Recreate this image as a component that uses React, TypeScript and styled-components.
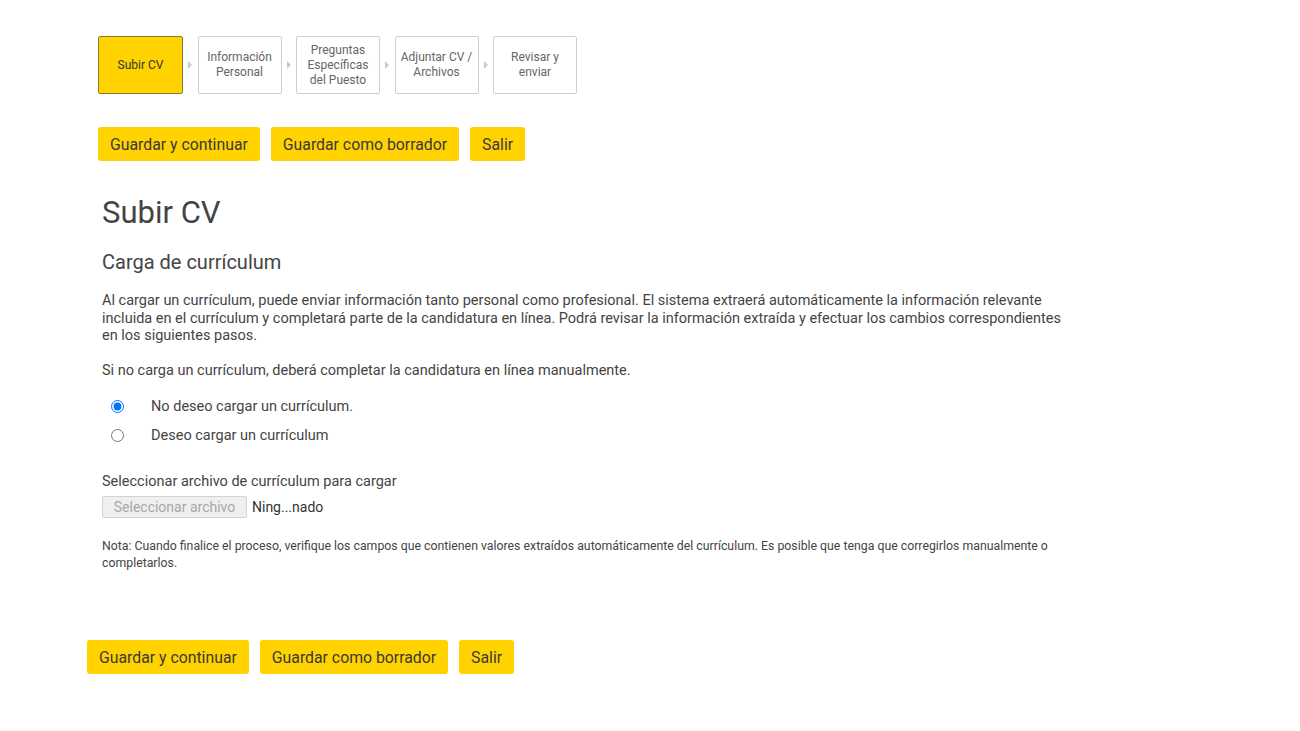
import React, { useState } from 'react';
import styled, { createGlobalStyle } from 'styled-components';

const GlobalStyle = createGlobalStyle`
  body {
    margin: 0;
    background: #ffffff;
    font-family: Roboto, "Liberation Sans", Arial, sans-serif;
    color: #444444;
  }
`;

const Page = styled.div`
  padding: 36px 0 0 98px;
  width: 1300px;
  box-sizing: border-box;
`;

const Stepper = styled.ol`
  display: flex;
  align-items: center;
  list-style: none;
  margin: 0;
  padding: 0;
`;

const StepItem = styled.li`
  display: flex;
  align-items: center;
`;

interface StepBoxProps {
  active: boolean;
}

const StepBox = styled.div<StepBoxProps>`
  width: ${props => (props.active ? 85 : 84)}px;
  height: 58px;
  box-sizing: border-box;
  display: flex;
  align-items: center;
  justify-content: center;
  text-align: center;
  font-size: 12px;
  line-height: 15px;
  padding: 0 4px;
  border-radius: 2px;
  color: ${props => (props.active ? '#333333' : '#666666')};
  background: ${props => (props.active ? '#ffd200' : '#ffffff')};
  border: 1px solid ${props => (props.active ? '#8a7a3a' : '#cfcfcf')};
`;

const StepArrow = styled.span`
  width: 0;
  height: 0;
  margin: 0 5.5px 0 5px;
  border-top: 4px solid transparent;
  border-bottom: 4px solid transparent;
  border-left: 4px solid #c8c8c8;
`;

const ActionBar = styled.div`
  display: flex;
  gap: 11px;
`;

const ActionButton = styled.button`
  height: 34px;
  padding: 0 12px;
  border: none;
  border-radius: 3px;
  background: #ffd200;
  color: #3a3a3a;
  font-family: Roboto, "Liberation Sans", Arial, sans-serif;
  font-size: 15.8px;
  cursor: pointer;
`;

const TopBar = styled.div`
  margin-top: 33px;
`;

const Content = styled.div`
  padding-left: 4px;
  width: 970px;
`;

const Title = styled.h1`
  margin: 34px 0 0;
  font-size: 31px;
  font-weight: 400;
  line-height: 36px;
  color: #444444;
`;

const Subtitle = styled.h2`
  margin: 19px 0 0;
  font-size: 20px;
  font-weight: 400;
  line-height: 24px;
  color: #444444;
`;

interface ParagraphProps {
  gap: number;
}

const Paragraph = styled.p<ParagraphProps>`
  margin: ${props => props.gap}px 0 0;
  font-size: 14.5px;
  line-height: 17.5px;
  color: #444444;
`;

const RadioGroup = styled.div`
  margin-top: 18px;
  display: flex;
  flex-direction: column;
  gap: 10px;
`;

const RadioRow = styled.label`
  display: flex;
  align-items: center;
  font-size: 14.5px;
  line-height: 19px;
  color: #444444;
  cursor: pointer;
`;

const Radio = styled.input`
  width: 13px;
  height: 13px;
  margin: 0 27px 0 9px;
`;

const FieldLabel = styled.div`
  margin-top: 28px;
  font-size: 14.5px;
  line-height: 17px;
`;

const FileRow = styled.div`
  margin-top: 6px;
  display: flex;
  align-items: center;
  gap: 5px;
  font-size: 14px;
  color: #333333;
`;

const FileButton = styled.button`
  width: 145px;
  height: 22px;
  padding: 0;
  border: 1px solid #d4d4d4;
  border-radius: 2px;
  background: #efefef;
  color: #a8a8a8;
  font-family: Roboto, "Liberation Sans", Arial, sans-serif;
  font-size: 14px;
`;

const Note = styled.p`
  margin: 20px 0 0;
  font-size: 12.3px;
  line-height: 17px;
  color: #444444;
`;

const BottomBar = styled.div`
  margin: 68px 0 0 -15px;
`;

const steps = [
  ['Subir CV'],
  ['Información', 'Personal'],
  ['Preguntas', 'Específicas', 'del Puesto'],
  ['Adjuntar CV /', 'Archivos'],
  ['Revisar y', 'enviar'],
];

const Actions: React.FC = () => (
  <ActionBar>
    <ActionButton>Guardar y continuar</ActionButton>
    <ActionButton>Guardar como borrador</ActionButton>
    <ActionButton>Salir</ActionButton>
  </ActionBar>
);

const App: React.FC = () => {
  const [upload, setUpload] = useState('no');

  return (
    <Page>
      <GlobalStyle />
      <Stepper>
        {steps.map((lines, i) => (
          <StepItem key={i}>
            <StepBox active={i === 0}>
              <span>
                {lines.map((l, j) => (
                  <React.Fragment key={j}>
                    {l}
                    {j < lines.length - 1 && <br />}
                  </React.Fragment>
                ))}
              </span>
            </StepBox>
            {i < steps.length - 1 && <StepArrow />}
          </StepItem>
        ))}
      </Stepper>

      <TopBar>
        <Actions />
      </TopBar>

      <Content>
        <Title>Subir CV</Title>
        <Subtitle>Carga de currículum</Subtitle>
        <Paragraph gap={18}>
          Al cargar un currículum, puede enviar información tanto personal como profesional. El sistema extraerá
          automáticamente la información relevante incluida en el currículum y completará parte de la candidatura
          en línea. Podrá revisar la información extraída y efectuar los cambios correspondientes en los siguientes
          pasos.
        </Paragraph>
        <Paragraph gap={17}>
          Si no carga un currículum, deberá completar la candidatura en línea manualmente.
        </Paragraph>

        <RadioGroup>
          <RadioRow>
            <Radio
              type="radio"
              name="cv"
              checked={upload === 'no'}
              onChange={() => setUpload('no')}
            />
            No deseo cargar un currículum.
          </RadioRow>
          <RadioRow>
            <Radio
              type="radio"
              name="cv"
              checked={upload === 'yes'}
              onChange={() => setUpload('yes')}
            />
            Deseo cargar un currículum
          </RadioRow>
        </RadioGroup>

        <FieldLabel>Seleccionar archivo de currículum para cargar</FieldLabel>
        <FileRow>
          <FileButton disabled>Seleccionar archivo</FileButton>
          <span>Ning...nado</span>
        </FileRow>

        <Note>
          Nota: Cuando finalice el proceso, verifique los campos que contienen valores extraídos automáticamente
          del currículum. Es posible que tenga que corregirlos manualmente o completarlos.
        </Note>

        <BottomBar>
          <Actions />
        </BottomBar>
      </Content>
    </Page>
  );
};

export default App;
